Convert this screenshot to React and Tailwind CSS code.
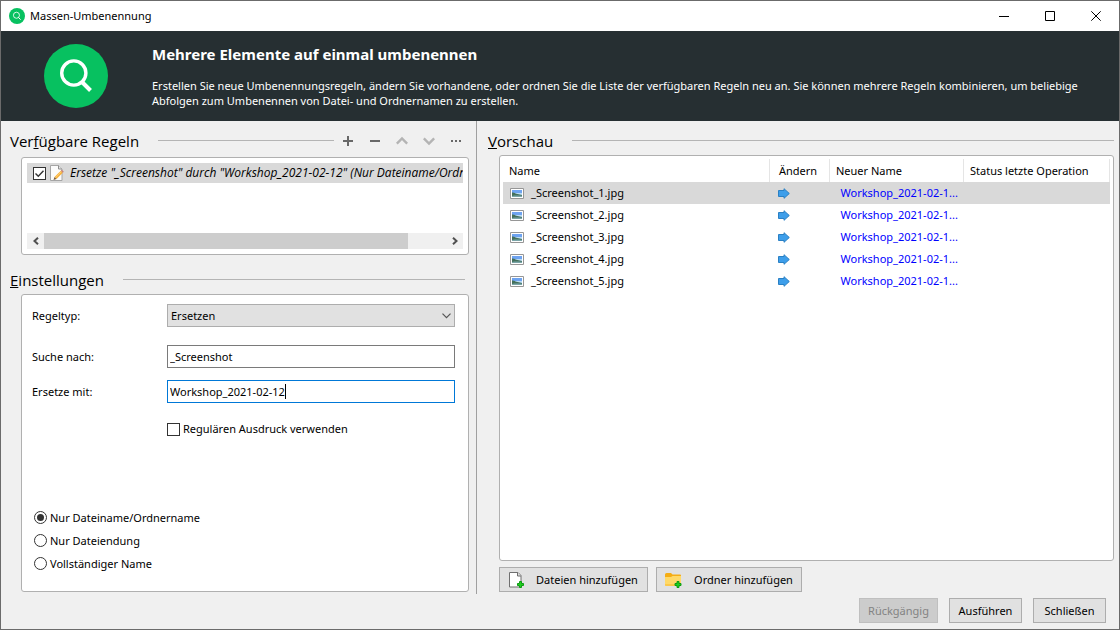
import React, { useState } from "react";

const FILES = [1, 2, 3, 4, 5].map((n) => ({
  name: `_Screenshot_${n}.jpg`,
  next: "Workshop_2021-02-1...",
}));

const SCOPES = ["Nur Dateiname/Ordnername", "Nur Dateiendung", "Vollständiger Name"];

function SearchLogo({ className }) {
  return (
    <svg className={className} viewBox="0 0 64 64" fill="none" aria-hidden="true">
      <circle cx="32" cy="32" r="32" fill="#07c160" />
      <circle cx="29.800" cy="29" r="12.100" stroke="#fff" strokeWidth="3.400" />
      <path d="M37.500 37.500 46.500 46.500" stroke="#fff" strokeWidth="4" />
    </svg>
  );
}

function NoteIcon() {
  return (
    <svg className="size-4 shrink-0" viewBox="0 0 16 16" aria-hidden="true">
      <path d="M.5.5h8l3.500 3.500v11.500H.5z" fill="#fbfbfb" stroke="#a5a5a5" />
      <path d="M8.500.5V4H12" fill="#e4e4e4" stroke="#8d8d8d" />
      <path d="m4.500 12.100 6.300-6.300 2 2-6.300 6.300z" fill="#f6b13c" />
      <path d="m5.200 12.800 6.300-6.300" stroke="#ffd27a" strokeWidth=".8" />
      <path d="m4.500 12.100-1 3 3-1z" fill="#7a5b36" />
      <path d="m10.800 5.800 1-1 2 2-1 1z" fill="#c98078" />
    </svg>
  );
}

function PictureIcon() {
  return (
    <svg className="h-[11px] w-[14px] shrink-0" viewBox="0 0 14 11" aria-hidden="true">
      <path d="M.5.500h13v10H.500z" fill="#fff" stroke="#969696" />
      <path d="M2 2h10v3H2z" fill="#6ea3f0" />
      <path d="M2 5h10v2H2z" fill="#bcdcf4" />
      <path d="M2 4.500c2-.4 3 .6 4.500 1.300L12 7v2H2z" fill="#44705c" />
      <path d="M2 8c4-.8 7-.4 10-.2V9H2z" fill="#7aa5a8" />
    </svg>
  );
}

function ArrowIcon() {
  return (
    <svg className="block h-[11px] w-3" viewBox="0 0 12 11" aria-hidden="true">
      <path d="M.5 2.500H6V.700l5.300 4.800L6 10.300V8.500H.500z" fill="#3d9eea" stroke="#2a80c4" />
    </svg>
  );
}

function AddBadge() {
  return (
    <path
      d="M10.500 9.500h2v2h2v2h-2v2h-2v-2h-2v-2h2z"
      fill="#1ed01e"
      stroke="#0f9a14"
    />
  );
}

function FileAddIcon() {
  return (
    <svg className="h-4 w-[15px]" viewBox="0 0 15 16" aria-hidden="true">
      <path d="M.5.5h8.500l3 3v11.500H.5z" fill="#fff" stroke="#6f6f6f" />
      <path d="M8.500.5V4H12" fill="#ddd" stroke="#6f6f6f" />
      <AddBadge />
    </svg>
  );
}

function FolderAddIcon() {
  return (
    <svg className="h-4 w-[17px]" viewBox="0 0 17 16" aria-hidden="true">
      <path d="M0 2.500Q0 1 1.500 1H6l1.500 1.500H15q1 0 1 1V6H0z" fill="#f5ad14" />
      <path d="M0 5h6l1.500-1H16v9q0 1-1 1H1q-1 0-1-1z" fill="#ffd968" />
      <path d="M0 12h16v1q0 1-1 1H1q-1 0-1-1z" fill="#fbc84a" />
      <g transform="translate(1.500 0)">
        <AddBadge />
      </g>
    </svg>
  );
}

function Glyph({ d, label, muted }) {
  return (
    <button type="button" aria-label={label} disabled={muted} className="flex h-6 w-[27px] items-center justify-center">
      <svg className={muted ? "size-3 text-[#b4b4b4]" : "size-3 text-[#686868]"} viewBox="0 0 12 12" fill="none" stroke="currentColor" strokeWidth={muted ? "2.500" : "2"} aria-hidden="true">
        <path d={d} />
      </svg>
    </button>
  );
}

function Section({ children, tools }) {
  return (
    <div className="flex h-6 items-center">
      <h2 className="mr-[19px] font-['Open_Sans',sans-serif] text-[15px] leading-6">{children}</h2>
      <span className="mb-[2px] h-px flex-1 bg-[#b4b4b4]" />
      {tools}
    </div>
  );
}

function Tick({ id, checked, onChange, label }) {
  return (
    <span className="relative flex size-[13px] shrink-0">
      <input
        id={id}
        type="checkbox"
        aria-label={label}
        checked={checked}
        onChange={onChange}
        className="size-[13px] appearance-none border border-[#333] bg-white"
      />
      {checked && (
        <svg className="pointer-events-none absolute inset-0 size-[13px]" viewBox="0 0 13 13" fill="none" stroke="#333" strokeWidth="1.400" aria-hidden="true">
          <path d="m2.500 6.500 2.800 2.800 5.200-5.500" />
        </svg>
      )}
    </span>
  );
}

function PushButton({ children, className, disabled }) {
  return (
    <button
      type="button"
      disabled={disabled}
      className={`flex h-[25px] items-center justify-center border border-[#adadad] bg-[#e1e1e1] disabled:border-[#bfbfbf] disabled:bg-[#ccc] disabled:text-[#838383] ${className}`}
    >
      {children}
    </button>
  );
}

export default function App() {
  const [active, setActive] = useState(true);
  const [regex, setRegex] = useState(false);
  const [scope, setScope] = useState(0);
  const [find, setFind] = useState("_Screenshot");
  const [replacement, setReplacement] = useState("Workshop_2021-02-12");

  return (
    <div className="flex min-h-screen flex-col border border-[#6b6b6b] bg-[#f0f0f0] font-['Noto_Sans','Open_Sans',sans-serif] text-[11px] leading-4 text-black">
      <div className="flex h-[30px] items-center bg-white pl-2">
        <SearchLogo className="size-4" />
        <span className="ml-[5px] flex-1">Massen-Umbenennung</span>
        <div className="flex">
          {[
            ["Minimieren", "M0 5.500h10"],
            ["Maximieren", "M.5.500h9v9h-9z"],
            ["Fenster schließen", "M.3.300l9.400 9.400M9.700.300.300 9.700"],
          ].map(([label, d]) => (
            <button key={label} type="button" aria-label={label} className="flex h-[29px] w-[46px] items-center justify-center">
              <svg className="size-[10px]" viewBox="0 0 10 10" fill="none" stroke="#000" aria-hidden="true">
                <path d={d} />
              </svg>
            </button>
          ))}
        </div>
      </div>

      <header className="flex h-[90px] items-center bg-[#262f32] pl-[43px] text-white">
        <SearchLogo className="size-16 shrink-0" />
        <div className="ml-11 flex-1 pr-6">
          <h1 className="text-[15px] font-bold leading-5">Mehrere Elemente auf einmal umbenennen</h1>
          <p className="mt-[14px] leading-[15px]">
            Erstellen Sie neue Umbenennungsregeln, ändern Sie vorhandene, oder ordnen Sie die Liste der verfügbaren Regeln neu an. Sie können mehrere Regeln kombinieren, um beliebige Abfolgen zum Umbenennen von Datei- und Ordnernamen zu erstellen.
          </p>
        </div>
      </header>

      <main className="flex flex-1">
        <div className="flex w-[476px] shrink-0 flex-col border-r border-[#a0a0a0] pb-[2px] pl-[9px] pr-[7px]">
          <section className="pt-2">
            <Section
              tools={
                <div className="flex">
                  <Glyph label="Regel hinzufügen" d="M1 6h10M6 1v10" />
                  <Glyph label="Regel entfernen" d="M1 6h10" />
                  <Glyph label="Nach oben" muted d="M.8 8.600 6 3.400l5.200 5.200" />
                  <Glyph label="Nach unten" muted d="M.8 3.400 6 8.600l5.200-5.200" />
                  <Glyph label="Weitere Aktionen" d="M1 6h2M5 6h2M9 6h2" />
                </div>
              }
            >
              Ver<u>f</u>ügbare Regeln
            </Section>
            <div className="ml-[11px] mt-1 flex h-[98px] flex-col justify-between rounded-[3px] border border-[#b0b0b0] bg-white p-[5px]">
              <div className="flex h-5 items-center overflow-hidden bg-[#d9d9d9] pl-[6px]">
                <Tick label="Regel aktiv" checked={active} onChange={() => setActive(!active)} />
                <span className="ml-1 flex"><NoteIcon /></span>
                <span className="ml-1 whitespace-nowrap font-['Open_Sans',sans-serif] text-xs italic">
                  Ersetze "_Screenshot" durch "Workshop_2021-02-12" (Nur Dateiname/Ordnername)
                </span>
              </div>
              <div className="flex h-4 bg-[#f0f0f0]">
                <button type="button" aria-label="Nach links" className="flex w-[17px] items-center justify-center">
                  <svg className="size-2" viewBox="0 0 8 8" fill="none" stroke="#505050" strokeWidth="2" aria-hidden="true"><path d="M6 .8 2.500 4 6 7.200" /></svg>
                </button>
                <div className="flex-1"><div className="h-full w-[90.500%] bg-[#cdcdcd]" /></div>
                <button type="button" aria-label="Nach rechts" className="flex w-[17px] items-center justify-center">
                  <svg className="size-2" viewBox="0 0 8 8" fill="none" stroke="#505050" strokeWidth="2" aria-hidden="true"><path d="M2 .8 5.500 4 2 7.200" /></svg>
                </button>
              </div>
            </div>
          </section>

          <section className="flex flex-1 flex-col pt-[13px]">
            <Section tools={<span className="w-1" />}><u>E</u>instellungen</Section>
            <div className="ml-[11px] mt-[2px] flex flex-1 flex-col justify-between rounded-[3px] border border-[#b0b0b0] bg-white pb-4 pl-[10px] pr-[13px] pt-[9px]">
              <div className="grid grid-cols-[135px_1fr] items-center">
                <label htmlFor="rule-type">Regeltyp:</label>
                <div className="relative">
                  <select id="rule-type" className="block h-[23px] w-full appearance-none border border-[#adadad] bg-[#e1e1e1] pl-[3px]">
                    <option>Ersetzen</option>
                  </select>
                  <svg className="pointer-events-none absolute right-1 top-[9px] h-[6px] w-[9px]" viewBox="0 0 9 6" fill="none" stroke="#555" strokeWidth="1.200" aria-hidden="true"><path d="m.5.700 4 4 4-4" /></svg>
                </div>
                <label htmlFor="find" className="mt-[18px]">Suche nach:</label>
                <input id="find" value={find} onChange={(e) => setFind(e.target.value)} className="mt-[18px] h-[23px] w-full border border-[#7a7a7a] bg-white px-[2px] outline-none" />
                <label htmlFor="replacement" className="mt-3">Ersetze mit:</label>
                <div className="relative mt-3">
                  <input id="replacement" value={replacement} onChange={(e) => setReplacement(e.target.value)} className="block h-[23px] w-full border border-[#0078d7] bg-white px-[2px] outline-none" />
                  <span className="pointer-events-none absolute left-[118px] top-1 h-[15px] w-px bg-black" />
                </div>
                <div className="col-start-2 mt-[18px] flex items-center">
                  <Tick id="regex" checked={regex} onChange={() => setRegex(!regex)} />
                  <label htmlFor="regex" className="ml-[3px]">Regulären Ausdruck verwenden</label>
                </div>
              </div>
              <div className="flex flex-col pl-[2px]">
                {SCOPES.map((label, i) => (
                  <label key={label} className="flex h-[23px] items-center">
                    <span className="relative flex size-[13px]">
                      <input type="radio" name="scope" checked={scope === i} onChange={() => setScope(i)} className="size-[13px] appearance-none rounded-full border border-[#333] bg-white" />
                      {scope === i && <span className="pointer-events-none absolute inset-[3px] rounded-full bg-[#333]" />}
                    </span>
                    <span className="ml-[3px]">{label}</span>
                  </label>
                ))}
              </div>
            </div>
          </section>
        </div>

        <section className="flex min-w-0 flex-1 flex-col pl-[11px] pr-[5px] pt-2">
          <Section tools={null}><u>V</u>orschau</Section>
          <div className="ml-[11px] mt-[2px] flex-1 rounded-[3px] border border-[#b0b0b0] bg-white px-[3px] pt-[3px]">
            <table className="w-full table-fixed border-collapse text-left">
              <colgroup>
                <col />
                <col className="w-[60px]" />
                <col className="w-[134px]" />
                <col className="w-[146px]" />
              </colgroup>
              <thead>
                <tr className="h-[23px] whitespace-nowrap">
                  {["Name", "Ändern", "Neuer Name", "Status letzte Operation"].map((title, i) => (
                    <th key={title} className={`border-r border-[#e5e5e5] p-0 font-normal ${i === 1 ? "pl-[9px]" : "pl-[6px]"}`}>{title}</th>
                  ))}
                </tr>
              </thead>
              <tbody>
                {FILES.map((file, i) => (
                  <tr key={file.name} className={i === 0 ? "h-[22px] bg-[#d9d9d9]" : "h-[22px]"}>
                    <td className="p-0 pl-[7px]">
                      <span className="flex items-center gap-[7px]"><PictureIcon />{file.name}</span>
                    </td>
                    <td className="p-0 pl-2"><ArrowIcon /></td>
                    <td className="whitespace-nowrap p-0 pl-[11px] text-[#0000ff]">{file.next}</td>
                    <td className="p-0" />
                  </tr>
                ))}
              </tbody>
            </table>
          </div>
          <div className="ml-[11px] mt-[6px] flex gap-2 pb-[2px]">
            <PushButton className="w-[149px] gap-3"><FileAddIcon />Dateien hinzufügen</PushButton>
            <PushButton className="w-[146px] gap-3"><FolderAddIcon />Ordner hinzufügen</PushButton>
          </div>
        </section>
      </main>

      <footer className="flex justify-end gap-[11px] pb-[6px] pr-[13px] pt-1">
        <PushButton disabled className="w-[79px]">Rückgängig</PushButton>
        <PushButton className="w-[73px]">Ausführen</PushButton>
        <PushButton className="w-[73px]">Schließen</PushButton>
      </footer>
    </div>
  );
}
